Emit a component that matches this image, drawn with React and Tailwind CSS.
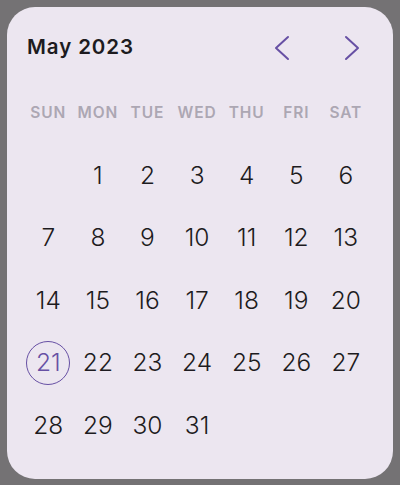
import React from "react";

const weekdays = ["SUN", "MON", "TUE", "WED", "THU", "FRI", "SAT"];
const cells = [null, 1, 2, 3, 4, 5, 6];
for (let d = 7; d <= 31; d++) cells.push(d);

function Chevron({ dir }) {
  const d = dir === "left" ? "M29 13 L17 24 L29 35" : "M19 13 L31 24 L19 35";
  return (
    <button className="w-[48px] h-[48px] flex items-center justify-center">
      <svg width="48" height="48" viewBox="0 0 48 48" fill="none">
        <path d={d} stroke="#6750A4" strokeWidth="2" strokeLinecap="round" strokeLinejoin="round" />
      </svg>
    </button>
  );
}

export default function App() {
  return (
    <div className="w-[400px] h-[485px] bg-[#747274] pt-[7px] pl-[7px]" style={{ fontFamily: "Inter, Roboto, sans-serif" }}>
      <div className="w-[386px] h-[472px] bg-[#ECE6F0] rounded-[28px] flex flex-col">
        <div className="h-[81px] flex items-center justify-between pl-[20px] pr-[18px]">
          <div className="text-[20.5px] font-semibold text-[#1D1B20] tracking-[0.9px]">May 2023</div>
          <div className="flex gap-[20px]">
            <Chevron dir="left" />
            <Chevron dir="right" />
          </div>
        </div>
        <div className="grid grid-cols-[repeat(7,49.6px)] pl-[16.5px] h-[50px] items-center">
          {weekdays.map((w) => (
            <div key={w} className="text-center text-[15.5px] font-semibold text-[#ACA7B3] tracking-[0.9px]">{w}</div>
          ))}
        </div>
        <div className="grid grid-cols-[repeat(7,49.6px)] auto-rows-[62.5px] pl-[16.5px] mt-[6px]">
          {cells.map((d, i) => (
            <div key={i} className="flex items-center justify-center">
              {d === 21 ? (
                <div className="w-[44px] h-[44px] rounded-full border border-[#6750A4] flex items-center justify-center text-[24.5px] font-light text-[#6750A4]">
                  21
                </div>
              ) : (
                <span className="text-[24.5px] font-light text-[#1D1B20]">{d ?? ""}</span>
              )}
            </div>
          ))}
        </div>
      </div>
    </div>
  );
}
